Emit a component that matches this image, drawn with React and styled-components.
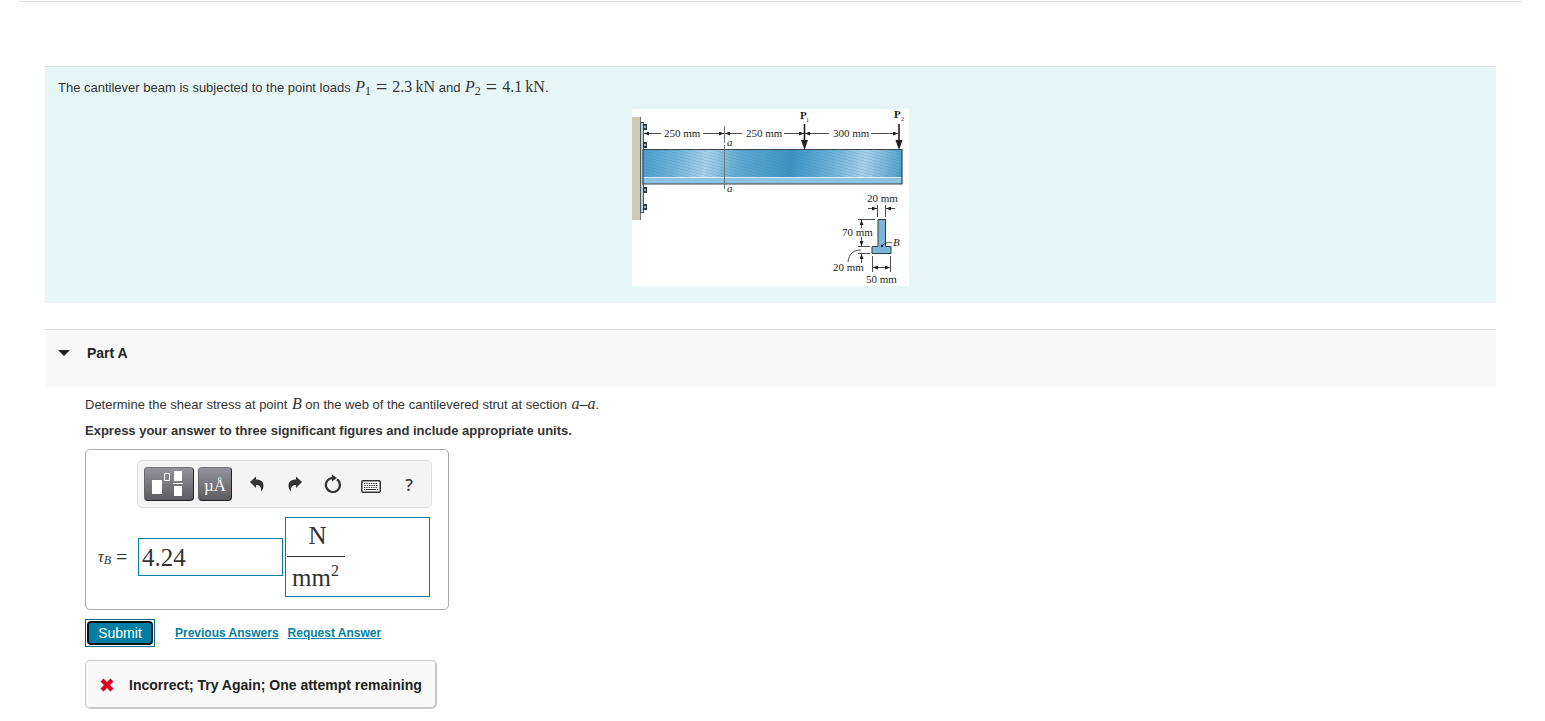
import React, { useState } from "react";
import styled, { createGlobalStyle } from "styled-components";

function BeamFigure() {
  return (
    <Figure
      viewBox="0 0 277 177"
      role="img"
      aria-label="Cantilever beam with loads P1 and P2, and its cross section"
    >
      <defs>
        <linearGradient
          id="web"
          x1="11"
          x2="270"
          y1="50"
          y2="90"
          gradientUnits="userSpaceOnUse"
        >
          <stop offset="0" stopColor="#4f9fcb" />
          <stop offset="0.12" stopColor="#6fb3d9" />
          <stop offset="0.24" stopColor="#abd2e8" />
          <stop offset="0.36" stopColor="#62aad3" />
          <stop offset="0.56" stopColor="#3e92c2" />
          <stop offset="0.72" stopColor="#6fb3d9" />
          <stop offset="0.84" stopColor="#abd2e8" />
          <stop offset="1" stopColor="#4598c8" />
        </linearGradient>
        <pattern id="grain" width="12" height="3" patternUnits="userSpaceOnUse">
          <path d="M0 0L12 3" stroke="#2f7fae" strokeWidth="0.6" opacity="0.4" />
        </pattern>
        <marker
          id="tip"
          markerWidth="6"
          markerHeight="4"
          refX="5"
          refY="2"
          orient="auto-start-reverse"
          markerUnits="userSpaceOnUse"
        >
          <path d="M0 0L5 2L0 4Z" fill="#231f20" />
        </marker>
      </defs>

      {/* wall, plate and bolts */}
      <rect x="0" y="8" width="8" height="103" fill="#d0c9b6" />
      <path d="M8.5 8V111" stroke="#77736a" />
      <rect x="8.5" y="13.5" width="3" height="90" fill="#b5d3e4" stroke="#4b5a64" />
      {[18, 36, 81, 98].map((y) => (
        <g key={y}>
          <rect x="11" y={y - 3} width="4" height="6" fill="#333c44" />
          <rect x="12" y={y - 1} width="2" height="2" fill="#9fb4c0" />
        </g>
      ))}

      {/* beam */}
      <rect x="11" y="40" width="259" height="35" fill="url(#web)" />
      <rect x="11" y="40" width="259" height="28" fill="url(#grain)" />
      <rect x="11" y="68" width="259" height="7" fill="#8cc3e0" />
      <path d="M11 68.5H270" stroke="#dcedf6" />
      <path d="M11 40.5H270V75H11Z" fill="none" stroke="#39444c" strokeWidth="1.2" />
      <path d="M92.5 17V34M92.5 36V80" stroke="#6d7579" />

      {/* dimension lines along the beam */}
      <g stroke="#231f20" strokeWidth="0.8">
        <path d="M29 24.5H12" markerEnd="url(#tip)" />
        <path d="M71 24.5H92" markerEnd="url(#tip)" />
        <path d="M110 24.5H93" markerEnd="url(#tip)" />
        <path d="M152 24.5H172" markerEnd="url(#tip)" />
        <path d="M197 24.5H173" markerEnd="url(#tip)" />
        <path d="M239 24.5H266" markerEnd="url(#tip)" />
      </g>
      <FigureText x="32" y="28">250 mm</FigureText>
      <FigureText x="114" y="28">250 mm</FigureText>
      <FigureText x="201" y="28">300 mm</FigureText>
      <FigureText x="95" y="37" $italic>a</FigureText>
      <FigureText x="95" y="83" $italic>a</FigureText>

      {/* loads */}
      <path d="M172.5 15V34M267 15V34" stroke="#231f20" strokeWidth="1.6" />
      <path d="M169 31H176L172.5 41ZM263.5 31H270.5L267 41Z" fill="#231f20" />
      <FigureText x="168" y="10" $bold>P</FigureText>
      <FigureText x="174" y="13" $small>1</FigureText>
      <FigureText x="262" y="9" $bold>P</FigureText>
      <FigureText x="269" y="12" $small>2</FigureText>

      {/* cross section */}
      <path
        d="M246 110.5H253.5V137.5H259V144.5H240V137.5H246Z"
        fill="#7eb6d9"
        stroke="#2f3b44"
      />
      <circle cx="250" cy="137" r="1.2" fill="#231f20" />
      <g stroke="#231f20" strokeWidth="0.8" fill="none">
        <path d="M245.5 96V108M253.5 96V108" />
        <path d="M236 99.5H245" markerEnd="url(#tip)" />
        <path d="M263 99.5H254" markerEnd="url(#tip)" />
        <path d="M226 110.5H243M226 137.5H238M226 144.5H238" />
        <path d="M229.5 119V111" markerEnd="url(#tip)" />
        <path d="M229.5 128V137" markerEnd="url(#tip)" />
        <path d="M229.5 154V145" markerEnd="url(#tip)" />
        <path d="M229 141C221 141 217 145 216 153" />
        <path d="M240.5 147V163M258.5 147V163" />
        <path d="M241 158.5H258" markerStart="url(#tip)" markerEnd="url(#tip)" />
        <path d="M251 136C254 133 257 133 260 134" />
      </g>
      <FigureText x="235" y="93">20 mm</FigureText>
      <FigureText x="210" y="127">70 mm</FigureText>
      <FigureText x="201" y="162">20 mm</FigureText>
      <FigureText x="234" y="174">50 mm</FigureText>
      <FigureText x="261" y="137" $italic>B</FigureText>
    </Figure>
  );
}

function Toolbar() {
  return (
    <ToolbarBar role="toolbar" aria-label="Equation editor">
      <DarkButton type="button" aria-label="Templates" $wide>
        <svg width="34" height="26" viewBox="0 0 34 26">
          <path d="M0 9H10V23H0Z" fill="#fff" />
          <path d="M12.500 2.500H17.500V9.500H12.500Z" fill="none" stroke="#fff" />
          <path d="M22 0H30V10H22ZM22 15H30V25H22ZM21 12H31V13H21Z" fill="#fff" />
        </svg>
      </DarkButton>
      <DarkButton type="button" aria-label="Units and symbols">
        µÅ
      </DarkButton>
      <ToolGroup>
        <ToolButton type="button" aria-label="Undo">
          <svg width="14" height="16" viewBox="0 0 14 16">
            <path
              d="M0 6L6 0.5V3.5C11 3.5 13.5 6 13.5 9.5C13.5 12 12.5 14 11 15.5C11.5 11.5 10 9 6 9V12Z"
              fill="#333"
            />
          </svg>
        </ToolButton>
        <ToolButton type="button" aria-label="Redo">
          <svg width="14" height="16" viewBox="0 0 14 16">
            <path
              d="M14 6L8 0.5V3.5C3 3.5 0.5 6 0.5 9.5C0.5 12 1.5 14 3 15.5C2.5 11.5 4 9 8 9V12Z"
              fill="#333"
            />
          </svg>
        </ToolButton>
        <ToolButton type="button" aria-label="Reset">
          <svg width="18" height="20" viewBox="0 0 18 20">
            <path
              d="M13 5.3A7 7 0 1 1 8.5 4"
              fill="none"
              stroke="#333"
              strokeWidth="2.2"
            />
            <path d="M8 0.5L13 4L8 7.5Z" fill="#333" />
          </svg>
        </ToolButton>
        <ToolButton type="button" aria-label="Keyboard shortcuts">
          <svg width="20" height="18" viewBox="0 0 20 18">
            <rect
              x="0.8"
              y="5.8"
              width="18.4"
              height="11.4"
              rx="1"
              fill="#fff"
              stroke="#333"
              strokeWidth="1.5"
            />
            <path
              d="M3 8.5H17M3.5 10.5H17M3 12.5H17"
              stroke="#333"
              strokeWidth="1.2"
              strokeDasharray="1.4 0.9"
            />
            <path d="M5 14.5H15M3 14.5H4M16 14.5H17" stroke="#333" />
          </svg>
        </ToolButton>
        <ToolButton type="button" aria-label="Help">
          ?
        </ToolButton>
      </ToolGroup>
    </ToolbarBar>
  );
}

function App() {
  const [open, setOpen] = useState(true);
  const [value, setValue] = useState("4.24");

  return (
    <>
      <GlobalStyle />
      <Page>
        <TopRule />
        <Problem>
          <Text>
            The cantilever beam is subjected to the point loads{" "}
            <Math>
              <i>P</i>
              <sub>1</sub>
              <Equals>=</Equals>2.3&#8201;kN
            </Math>{" "}
            and{" "}
            <Math>
              <i>P</i>
              <sub>2</sub>
              <Equals>=</Equals>4.1&#8201;kN
            </Math>
            .
          </Text>
          <BeamFigure />
        </Problem>

        <PartHeader>
          <PartToggle
            type="button"
            aria-expanded={open}
            onClick={() => setOpen(!open)}
          >
            <Caret $open={open} />
            Part A
          </PartToggle>
        </PartHeader>

        {open && (
          <PartBody>
            <Text>
              Determine the shear stress at point{" "}
              <Math>
                <i>B</i>
              </Math>{" "}
              on the web of the cantilevered strut at section{" "}
              <Math>
                <i>a–a</i>
              </Math>
              .
            </Text>
            <Instruction>
              Express your answer to three significant figures and include
              appropriate units.
            </Instruction>

            <AnswerBox>
              <Toolbar />
              <AnswerRow>
                <AnswerLabel htmlFor="answer">
                  <span>
                    <i>τ</i>
                    <sub>B</sub>
                  </span>
                  <Equals>=</Equals>
                </AnswerLabel>
                <ValueInput
                  id="answer"
                  value={value}
                  onChange={(e) => setValue(e.target.value)}
                />
                <UnitField role="textbox" aria-label="Units" tabIndex={0}>
                  <Fraction>
                    <Numerator>N</Numerator>
                    <Denominator>
                      mm<sup>2</sup>
                    </Denominator>
                  </Fraction>
                </UnitField>
              </AnswerRow>
            </AnswerBox>

            <Actions>
              <SubmitButton type="button">
                <SubmitFace>Submit</SubmitFace>
              </SubmitButton>
              <ActionLink href="#previous">Previous Answers</ActionLink>
              <ActionLink href="#request">Request Answer</ActionLink>
            </Actions>

            <Feedback role="status">
              <svg width="14" height="14" viewBox="0 0 14 14" aria-hidden="true">
                <path
                  d="M3.5 0.5L7 4L10.5 0.5L13.5 3.5L10 7L13.5 10.5L10.5 13.5L7 10L3.5 13.5L0.5 10.5L4 7L0.5 3.5Z"
                  fill="#db0020"
                />
              </svg>
              Incorrect; Try Again; One attempt remaining
            </Feedback>
          </PartBody>
        )}
      </Page>
    </>
  );
}

export default App;

const teal = "#007fa3";
const serif = `"Liberation Serif", "Times New Roman", serif`;
const sans = `"Liberation Sans", Arial, sans-serif`;

const GlobalStyle = createGlobalStyle`
  * {
    box-sizing: border-box;
  }

  body {
    margin: 0;
    background: #fff;
    color: #333;
    font-family: ${sans};
    font-size: 13px;
    line-height: 20px;
  }

  p {
    margin: 0;
  }
`;

const Page = styled.main`
  padding: 1px 49px 12px 45px;
`;

const TopRule = styled.hr`
  height: 1px;
  margin: 0 -26px 64px;
  border: 0;
  background: #e0e0e0;
`;

const Problem = styled.section`
  padding: 11px 13px 17px;
  border-top: 1px solid #dcdcdc;
  background: #e6f6f7;
`;

const Text = styled.p`
  line-height: 20px;
`;

const Math = styled.span`
  margin-left: 1px;
  font-family: ${serif};
  font-size: 16px;
  line-height: 16px;
  white-space: nowrap;

  sub {
    font-size: 12px;
    line-height: 0;
    vertical-align: -3px;
  }
`;

const Equals = styled.span`
  margin: 0 5px;
  font-family: ${serif};
  font-size: 20px;
  line-height: 0;
  vertical-align: -2px;
`;

const Figure = styled.svg`
  display: block;
  width: 277px;
  margin: 11px auto 0;
  background: #fff;
`;

const FigureText = styled.text`
  font-family: ${serif};
  font-size: ${(props) => (props.$small ? "6px" : "11px")};
  font-style: ${(props) => (props.$italic ? "italic" : "normal")};
  font-weight: ${(props) => (props.$bold ? "bold" : "normal")};
  fill: #231f20;
`;

const PartHeader = styled.header`
  height: 58px;
  margin-top: 26px;
  padding: 13px;
  border-top: 1px solid #dcdcdc;
  background: #f9f9f9;
`;

const PartToggle = styled.button`
  display: flex;
  align-items: center;
  gap: 17px;
  padding: 0;
  border: 0;
  background: none;
  color: #222;
  font-family: ${sans};
  font-size: 14px;
  font-weight: bold;
  line-height: 20px;
  cursor: pointer;
`;

const Caret = styled.span`
  border: 6px solid transparent;
  border-top-color: #222;
  border-bottom-width: 0;
  transform: ${(props) => (props.$open ? "none" : "rotate(-90deg)")};
`;

const PartBody = styled.div`
  padding: 8px 0 0 40px;
`;

const Instruction = styled.p`
  margin-top: 6px;
  font-weight: bold;
`;

const AnswerBox = styled.div`
  width: fit-content;
  margin-top: 8px;
  padding: 10px 16px 12px 12px;
  border: 1px solid #aaa;
  border-radius: 5px;
`;

const ToolbarBar = styled.div`
  display: flex;
  gap: 4px;
  width: fit-content;
  margin-left: 39px;
  padding: 6px 3px 6px 6px;
  border: 1px solid #ddd;
  border-radius: 5px;
  background: #f4f4f4;
`;

const DarkButton = styled.button`
  display: flex;
  align-items: center;
  justify-content: center;
  width: ${(props) => (props.$wide ? "50px" : "34px")};
  height: 34px;
  padding: ${(props) => (props.$wide ? "0" : "4px 0 0")};
  border: 1px solid #222;
  border-top-color: #777;
  border-left-color: #666;
  border-radius: 4px;
  background: linear-gradient(#94939b, #5c5c60);
  color: #fff;
  font-family: ${serif};
  font-size: 17px;
  cursor: pointer;
`;

const ToolGroup = styled.div`
  display: flex;
  margin-left: 2px;
`;

const ToolButton = styled.button`
  display: flex;
  align-items: center;
  justify-content: center;
  width: 38px;
  padding: 0;
  border: 0;
  background: none;
  color: #333;
  font-family: "Noto Sans", sans-serif;
  font-size: 17px;
  font-weight: 500;
  cursor: pointer;
`;

const AnswerRow = styled.div`
  display: flex;
  align-items: center;
  gap: 2px;
  margin-top: 9px;
`;

const AnswerLabel = styled.label`
  display: flex;
  align-items: center;
  width: 38px;
  font-family: ${serif};
  font-size: 16px;
  line-height: 20px;
  white-space: nowrap;

  sub {
    font-size: 12px;
    font-style: italic;
    line-height: 0;
    vertical-align: -2px;
  }
`;

const ValueInput = styled.input`
  width: 145px;
  height: 38px;
  padding: 1px 3px 0;
  border: 1px solid ${teal};
  color: #333;
  font-family: ${serif};
  font-size: 25px;
`;

const UnitField = styled.div`
  width: 145px;
  height: 80px;
  padding: 1px;
  border: 1px solid ${teal};
  font-family: ${serif};
  font-size: 25px;
`;

const Fraction = styled.span`
  display: inline-flex;
  flex-direction: column;
  text-align: center;
`;

const Numerator = styled.span`
  padding: 0 0 4px 3px;
  border-bottom: 1px solid #333;
  line-height: 33px;
`;

const Denominator = styled.span`
  padding: 0 6px 0 5px;
  line-height: 42px;

  sup {
    font-size: 16px;
    line-height: 0;
    vertical-align: 10px;
  }
`;

const Actions = styled.div`
  display: flex;
  align-items: center;
  margin-top: 9px;
`;

const SubmitButton = styled.button`
  display: flex;
  width: 70px;
  height: 28px;
  margin-right: 11px;
  padding: 1px;
  border: 1px solid #006280;
  background: #fff;
  cursor: pointer;
`;

const SubmitFace = styled.span`
  flex: 1;
  border: 2px solid #111;
  border-radius: 4px;
  background: ${teal};
  color: #fff;
  font-family: ${sans};
  font-size: 14px;
  line-height: 20px;
`;

const ActionLink = styled.a`
  margin-left: 9px;
  color: ${teal};
  font-size: 12px;
  font-weight: bold;
`;

const Feedback = styled.div`
  display: flex;
  align-items: center;
  gap: 15px;
  width: fit-content;
  height: 49px;
  margin-top: 13px;
  padding: 0 14px;
  border: 1px solid #c8c8c8;
  border-radius: 5px;
  box-shadow: inset -1px -1px 0 #c8c8c8;
  background: #f9f9f9;
  color: #222;
  font-size: 14px;
  font-weight: bold;
`;
